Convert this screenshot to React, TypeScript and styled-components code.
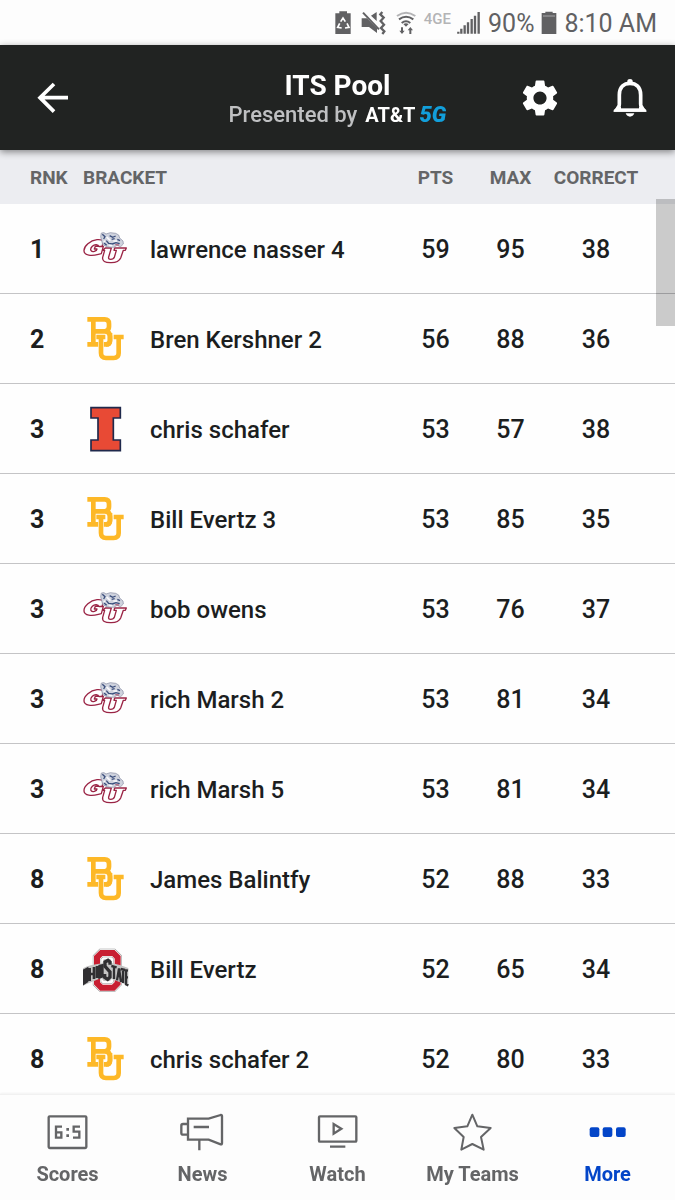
import React from "react";
import styled, { createGlobalStyle } from "styled-components";
import { MdSettings } from "react-icons/md";

const GlobalStyle = createGlobalStyle`
  *, *::before, *::after { box-sizing: border-box; }
  body { margin: 0; background: #fefefe; color: #1c1e1f; font-family: Roboto, "Liberation Sans", sans-serif; }
  button { font: inherit; color: inherit; background: none; border: 0; padding: 0; cursor: pointer; }
`;

const Screen = styled.div`
  height: 100vh;
  display: flex;
  flex-direction: column;
`;

const StatusBar = styled.div`
  flex: none;
  height: 45px;
  padding-right: 18px;
  display: flex;
  align-items: center;
  justify-content: flex-end;
  gap: 7px;
  background: #fdfdfd;
  color: #616163;
  font-size: 25px;
  line-height: 44px;
  svg { display: block; }
`;

const StatusTime = styled.span`
  padding: 2px 0 0;
`;

const StatusIcons = styled.div`
  display: flex;
  align-items: center;
  gap: 10px;
`;

const NetworkLabel = styled.span`
  height: 34px;
  margin: 0 -4px 0 -2px;
  color: #b4b4b6;
  font-size: 15px;
  font-weight: 500;
  line-height: 26px;
`;

const AppBar = styled.header`
  flex: none;
  position: relative;
  z-index: 3;
  min-height: 105px;
  display: grid;
  grid-template-columns: 1fr auto 1fr;
  align-items: center;
  background: #212322;
  color: #fff;
  box-shadow: 0 2px 7px rgba(0, 0, 0, 0.45);
`;

const BarActions = styled.div<{ $end?: boolean }>`
  display: flex;
  gap: 46px;
  justify-content: ${(p) => (p.$end ? "flex-end" : "flex-start")};
  padding: 0 23px 0 31px;
`;

const IconButton = styled.button`
  width: 44px;
  height: 44px;
  display: block;
  svg { display: block; }
`;

const TitleBlock = styled.div`
  padding-top: 2px;
  text-align: center;
  white-space: nowrap;
`;

const Title = styled.h1`
  margin: 0;
  font-size: 28px;
  line-height: 32px;
  font-weight: 700;
`;

const Sponsor = styled.p`
  margin: 0;
  display: flex;
  align-items: center;
  justify-content: center;
  gap: 8px;
  color: #bfc0c2;
  font-size: 22px;
  font-weight: 500;
  line-height: 26px;
`;

const SponsorBrand = styled.span`
  display: flex;
  gap: 4px;
  color: #fff;
  font-size: 20px;
  font-weight: 700;
`;

const SponsorAccent = styled.em`
  color: #129fdb;
  font-size: 22px;
  font-weight: 900;
`;

const Board = styled.main`
  position: relative;
  flex: 1;
  min-height: 0;
  display: flex;
`;

const Scroller = styled.div`
  flex: 1;
  overflow-y: auto;
  scrollbar-width: none;
  &::-webkit-scrollbar { display: none; }
`;

const ScrollThumb = styled.div`
  position: absolute;
  z-index: 2;
  top: 49px;
  right: 0;
  width: 19px;
  height: 127px;
  background: rgba(0, 0, 0, 0.2);
`;

const Standings = styled.table`
  width: 100%;
  table-layout: fixed;
  border-collapse: separate;
  border-spacing: 0;
`;

const HeadCell = styled.th<{ $width?: number; $kind?: "rank" | "stat" | "last" }>`
  position: sticky;
  top: 0;
  z-index: 1;
  height: 54px;
  width: ${(p) => (p.$width ? `${p.$width}px` : "auto")};
  padding: 2px ${(p) => (p.$kind === "last" ? 31 : 0)}px 0 ${(p) => (p.$kind === "rank" ? 30 : 0)}px;
  background: #ecedf1;
  color: #646567;
  font-size: 19px;
  font-weight: 700;
  line-height: 24px;
  text-align: ${(p) => (p.$kind === "stat" || p.$kind === "last" ? "center" : "left")};
`;

const Cell = styled.td<{ $kind?: "rank" | "stat" | "last" }>`
  height: 90px;
  padding: ${(p) => (p.$kind ? 2 : 0)}px ${(p) => (p.$kind === "last" ? 31 : 0)}px 0 ${(p) => (p.$kind === "rank" ? 30 : 0)}px;
  border-bottom: 1px solid #c4c4c6;
  font-size: 25px;
  font-weight: ${(p) => (p.$kind === "rank" ? 700 : 500)};
  line-height: 30px;
  text-align: ${(p) => (p.$kind === "stat" || p.$kind === "last" ? "center" : "left")};
`;

const Entry = styled.div`
  display: flex;
  align-items: center;
  gap: 21px;
  white-space: nowrap;
  svg { flex: none; display: block; }
`;

const EntryName = styled.span`
  padding-top: 2px;
  font-size: 24px;
`;

const TabBar = styled.nav`
  flex: none;
  position: relative;
  z-index: 3;
  display: flex;
  background: #fdfdfd;
  border-top: 1px solid #f1f1f1;
  box-shadow: 0 -1px 2px rgba(0, 0, 0, 0.05);
`;

const Tab = styled.button<{ $active?: boolean }>`
  && { color: ${(p) => (p.$active ? "#0345c8" : "#646567")}; }
  flex: 1;
  min-width: 0;
  padding: 14px 0;
  display: flex;
  flex-direction: column;
  align-items: center;
  gap: 5px;
  font-size: 20px;
  font-weight: 700;
  line-height: 24px;
  white-space: nowrap;
`;

type Team = "gonzaga" | "baylor" | "illinois" | "ohio";

const Gonzaga = () => (
  <svg width="46" height="46" viewBox="38 18 138 138" role="img" aria-label="Gonzaga" fill="none">
    <path d="M99 64 L95 80 H86 C84 73 73 72 66 79 C57 88 61 97 72 94 L78 91 L80 87 H72 L75 79 H99 L93 101 L84 103 C64 109 42 107 41 93 C40 78 60 61 80 59 C90 58 96 60 99 64 Z" fill="#fff" stroke="#9a2445" strokeWidth="4" strokeLinejoin="round" />
    <path d="M105 84 H123 L115 111 Q113 118 121 118 Q130 118 132 112 L138 91 H131 L133 84 H168 L165 91 H159 L151 114 Q145 128 123 128 Q94 129 97 112 L103 91 H97 Z" fill="#fff" stroke="#9a2445" strokeWidth="4" strokeLinejoin="round" />
    <path d="M91 50 L93 39 L101 38 L107 42 L120 38 L136 40 L145 45 L148 54 L158 63 L159 72 L151 80 L140 76 L130 82 L112 81 L97 74 L94 62 Z" fill="#cfd3de" />
    <path d="M93 39 L101 38 L107 42 L120 38 L136 40 L145 45 L148 54 L158 63 L159 72 L151 80 L140 76 L130 82 L112 81 L97 74 L94 62 L91 50 Z" stroke="#8589a0" strokeWidth="2" strokeLinejoin="round" />
    <path d="M96 43 L104 50 L100 57 M118 47 L127 52 L136 48 M124 58 L133 56 M141 58 L149 62 M108 62 L115 70 L126 72 L137 68 L148 71 M101 69 L109 76" stroke="#3c4f7d" strokeWidth="4" />
    <path d="M109 51 L114 56 L120 62 M129 63 L140 63 M115 76 L126 77 M100 63 L104 65" stroke="#fafafd" strokeWidth="5" />
    <path d="M135 74 L146 75" stroke="#a54d67" strokeWidth="3" />
  </svg>
);

const Baylor = () => (
  <svg width="46" height="46" viewBox="38 33 138 138" role="img" aria-label="Baylor" fill="none" stroke="#fdb827" strokeWidth="14">
    <path d="M51 43 H103 Q116 43 116 56 V65 Q116 76 105 79 Q119 81 119 94 V107 Q119 118 107 118 H51 M69 43 V118 M69 79 H105" />
    <path d="M92 96 V144 Q92 159 107 159 H130 Q145 159 145 144 V96" stroke="#fff" strokeWidth="17" />
    <path d="M78 96 H105 M130 96 H160 M92 96 V144 Q92 159 107 159 H130 Q145 159 145 144 V96" />
    <path d="M119 84 V107 Q119 118 107 118" />
  </svg>
);

const Illinois = () => (
  <svg width="46" height="46" viewBox="38 33 138 138" role="img" aria-label="Illinois">
    <path d="M62 38 H150 V69 H129 V135 H150 V167 H62 V135 H83 V69 H62 Z" fill="#e84a35" stroke="#1f294c" strokeWidth="5" />
  </svg>
);

const OhioState = () => (
  <svg width="46" height="46" viewBox="38 18 138 138" role="img" aria-label="Ohio State" fill="none">
    <path d="M88 37 H132 L151 56 V126 L132 144 H88 L69 126 V56 Z" fill="#fff" />
    <path d="M93 39 H129 L142 52 V130 L129 143 H93 L80 130 V52 Z" stroke="#8f8f8f" strokeWidth="25" />
    <path d="M93 39 H129 L142 52 V130 L129 143 H93 L80 130 V52 Z" stroke="#fff" strokeWidth="22" />
    <path d="M93 39 H129 L142 52 V130 L129 143 H93 L80 130 V52 Z" stroke="#c81f32" strokeWidth="18" />
    <path d="M37 85 Q56 75 96 70 L100 58 H121 L126 70 Q154 75 174 84 V137 L153 128 L124 117 L119 123 H100 L93 114 L58 128 L38 137 Z" fill="#c4c4c4" />
    <path d="M42 91 L50 87 V124 L42 129 Z M58 84 V123 M71 81 V117 M58 102 H71 M80 78 V114 M88 78 L96 76 V109 L88 112 Z" stroke="#302f32" strokeWidth="8" />
    <path d="M119 74 V66 L113 61 L104 66 V79 L119 96 V111 L112 118 L103 112 V102" stroke="#302f32" strokeWidth="10" />
    <path d="M123 78 L139 82 M131 80 V117 M140 121 L146 85 L152 126 M142 108 H151 M151 87 L164 90 M158 89 V129 M173 92 L167 91 V133 L174 136 M167 112 H173" stroke="#302f32" strokeWidth="7" />
  </svg>
);

const logos: Record<Team, React.FC> = {
  gonzaga: Gonzaga,
  baylor: Baylor,
  illinois: Illinois,
  ohio: OhioState,
};

const entries: { rank: number; team: Team; name: string; pts: number; max: number; correct: number }[] = [
  { rank: 1, team: "gonzaga", name: "lawrence nasser 4", pts: 59, max: 95, correct: 38 },
  { rank: 2, team: "baylor", name: "Bren Kershner 2", pts: 56, max: 88, correct: 36 },
  { rank: 3, team: "illinois", name: "chris schafer", pts: 53, max: 57, correct: 38 },
  { rank: 3, team: "baylor", name: "Bill Evertz 3", pts: 53, max: 85, correct: 35 },
  { rank: 3, team: "gonzaga", name: "bob owens", pts: 53, max: 76, correct: 37 },
  { rank: 3, team: "gonzaga", name: "rich Marsh 2", pts: 53, max: 81, correct: 34 },
  { rank: 3, team: "gonzaga", name: "rich Marsh 5", pts: 53, max: 81, correct: 34 },
  { rank: 8, team: "baylor", name: "James Balintfy", pts: 52, max: 88, correct: 33 },
  { rank: 8, team: "ohio", name: "Bill Evertz", pts: 52, max: 65, correct: 34 },
  { rank: 8, team: "baylor", name: "chris schafer 2", pts: 52, max: 80, correct: 33 },
];

const TabIcon = ({ x, children }: { x: number; children: React.ReactNode }) => (
  <svg width="48" height="48" viewBox={`${x} 73 144 144`} fill="none" stroke="currentColor" strokeWidth="7" aria-hidden="true">
    {children}
  </svg>
);

const tabs: { label: string; active?: boolean; icon: React.ReactNode }[] = [
  {
    label: "Scores",
    icon: (
      <TabIcon x={132}>
        <rect x="146" y="95" width="113" height="95" rx="3" />
        <path d="M186 126 H168 V159 H184 V143 H168 M240 126 H221 V141 H238 V159 H219" />
        <path d="M199 134 H207 M199 153 H207" strokeWidth="8" />
      </TabIcon>
    ),
  },
  {
    label: "News",
    icon: (
      <TabIcon x={537}>
        <path d="M564 102 H626 L662 91 Q666 90 666 94 V176 Q666 180 662 179 L626 165 H564 Z M561 118 H549 Q544 118 544 123 V145 Q544 150 549 150 H561 M598 166 V197 M581 127 H627" />
      </TabIcon>
    ),
  },
  {
    label: "Watch",
    icon: (
      <TabIcon x={942}>
        <rect x="957" y="95" width="112" height="76" rx="3" />
        <path d="M1001 118 V147 L1024 132 Z M990 186 H1036" />
      </TabIcon>
    ),
  },
  {
    label: "My Teams",
    icon: (
      <TabIcon x={342}>
        <path d="M412 90 L427 125 L467 130 L438 157 L446 195 L412 178 L379 195 L386 157 L358 130 L397 125 Z" strokeWidth="6" strokeLinejoin="round" />
      </TabIcon>
    ),
  },
  {
    label: "More",
    active: true,
    icon: (
      <TabIcon x={747}>
        <g fill="currentColor" stroke="none">
          <rect x="764" y="128" width="29" height="29" rx="6" />
          <rect x="803" y="128" width="29" height="29" rx="6" />
          <rect x="843" y="128" width="29" height="29" rx="6" />
        </g>
      </TabIcon>
    ),
  },
];

const BatterySaver = () => (
  <svg width="16" height="24" viewBox="40 32 48 72" aria-hidden="true">
    <path d="M53 33 H76 V39 H87 V101 H41 V39 H53 Z" fill="#616163" />
    <path d="M57 64 L64 53 L71 64 M76 69 L82 81 L70 83 M60 83 L48 81 L54 69" fill="none" stroke="#fff" strokeWidth="5" />
  </svg>
);

const MuteVibrate = () => (
  <svg width="25" height="24" viewBox="115 32 75 72" aria-hidden="true">
    <path d="M117 54 H133 L163 84 V98 L139 80 H117 Z M145 46 L162 35 V62 Z" fill="#616163" />
    <path d="M121 37 L169 87" stroke="#616163" strokeWidth="6" />
    <path d="M179 35 L173 42 L183 52 L174 62 L184 73 L175 83 L185 93 L179 101" fill="none" stroke="#616163" strokeWidth="7" />
  </svg>
);

const Wifi = () => (
  <svg width="20" height="24" viewBox="229 28 60 72" aria-hidden="true">
    <g fill="none" strokeWidth="6">
      <path d="M232 43 Q259 23 287 43" stroke="#b4b4b6" />
      <path d="M238 53 Q259 37 281 53 M246 64 Q259 54 272 64" stroke="#616163" />
      <path d="M247 77 V90 M272 83 V97" stroke="#616163" />
    </g>
    <path d="M251 67 Q259 62 267 67 L259 75 Z M239 87 H255 L247 97 Z M264 86 H280 L272 76 Z" fill="#616163" />
  </svg>
);

const Signal = () => (
  <svg width="24" height="24" viewBox="401 32 72 72" fill="none" stroke="#616163" strokeWidth="7" aria-hidden="true">
    <path d="M405 94 V100 M414 85 V100 M424 75 V100 M434 66 V100 M445 56 V100 M455 46 V100 M466 35 V100" />
  </svg>
);

const Battery = () => (
  <svg width="16" height="24" viewBox="650 32 48 72" aria-hidden="true">
    <path d="M663 34 H685 V38 H696 V101 H652 V38 H663 Z" fill="#616163" />
    <path d="M656 47 H692" stroke="#a8a8aa" strokeWidth="3" />
  </svg>
);

export default function App() {
  return (
    <Screen>
      <GlobalStyle />
      <StatusBar>
        <StatusIcons>
          <BatterySaver />
          <MuteVibrate />
          <Wifi />
          <NetworkLabel>4GE</NetworkLabel>
          <Signal />
        </StatusIcons>
        <StatusTime>90%</StatusTime>
        <Battery />
        <StatusTime>8:10 AM</StatusTime>
      </StatusBar>

      <AppBar>
        <BarActions>
          <IconButton aria-label="Back">
            <svg width="44" height="44" viewBox="93 92 132 132" fill="none" stroke="currentColor" strokeWidth="11" aria-hidden="true">
              <path d="M162 116 L120 157 L162 199 M122 157 H204" />
            </svg>
          </IconButton>
        </BarActions>
        <TitleBlock>
          <Title>ITS Pool</Title>
          <Sponsor>
            Presented by
            <SponsorBrand>
              AT&amp;T<SponsorAccent>5G</SponsorAccent>
            </SponsorBrand>
          </Sponsor>
        </TitleBlock>
        <BarActions $end>
          <IconButton aria-label="Settings">
            <MdSettings size={44} />
          </IconButton>
          <IconButton aria-label="Notifications">
            <svg width="44" height="44" viewBox="819 92 132 132" aria-hidden="true">
              <path d="M853 180 V149 C853 125 867 114 885 114 C903 114 917 125 917 149 V180 L925 194 H845 Z" fill="none" stroke="currentColor" strokeWidth="11" />
              <path d="M836 199 V194 L848 184 H922 L934 194 V199 Z M877 113 V106 Q877 101 885 101 Q893 101 893 106 V113 Z M872 204 H898 Q894 214 885 214 Q876 214 872 204 Z" fill="currentColor" />
              <path d="M858 178 H912 V189 H858 Z" fill="#212322" />
            </svg>
          </IconButton>
        </BarActions>
      </AppBar>

      <Board>
        <Scroller>
          <Standings>
            <thead>
              <tr>
                <HeadCell scope="col" $width={83} $kind="rank">RNK</HeadCell>
                <HeadCell scope="col">BRACKET</HeadCell>
                <HeadCell scope="col" $width={75} $kind="stat">PTS</HeadCell>
                <HeadCell scope="col" $width={75} $kind="stat">MAX</HeadCell>
                <HeadCell scope="col" $width={127} $kind="last">CORRECT</HeadCell>
              </tr>
            </thead>
            <tbody>
              {entries.map((e) => {
                const Logo = logos[e.team];
                return (
                  <tr key={e.name}>
                    <Cell $kind="rank">{e.rank}</Cell>
                    <Cell>
                      <Entry>
                        <Logo />
                        <EntryName>{e.name}</EntryName>
                      </Entry>
                    </Cell>
                    <Cell $kind="stat">{e.pts}</Cell>
                    <Cell $kind="stat">{e.max}</Cell>
                    <Cell $kind="last">{e.correct}</Cell>
                  </tr>
                );
              })}
            </tbody>
          </Standings>
        </Scroller>
        <ScrollThumb />
      </Board>

      <TabBar>
        {tabs.map((t) => (
          <Tab key={t.label} $active={t.active}>
            {t.icon}
            {t.label}
          </Tab>
        ))}
      </TabBar>
    </Screen>
  );
}
